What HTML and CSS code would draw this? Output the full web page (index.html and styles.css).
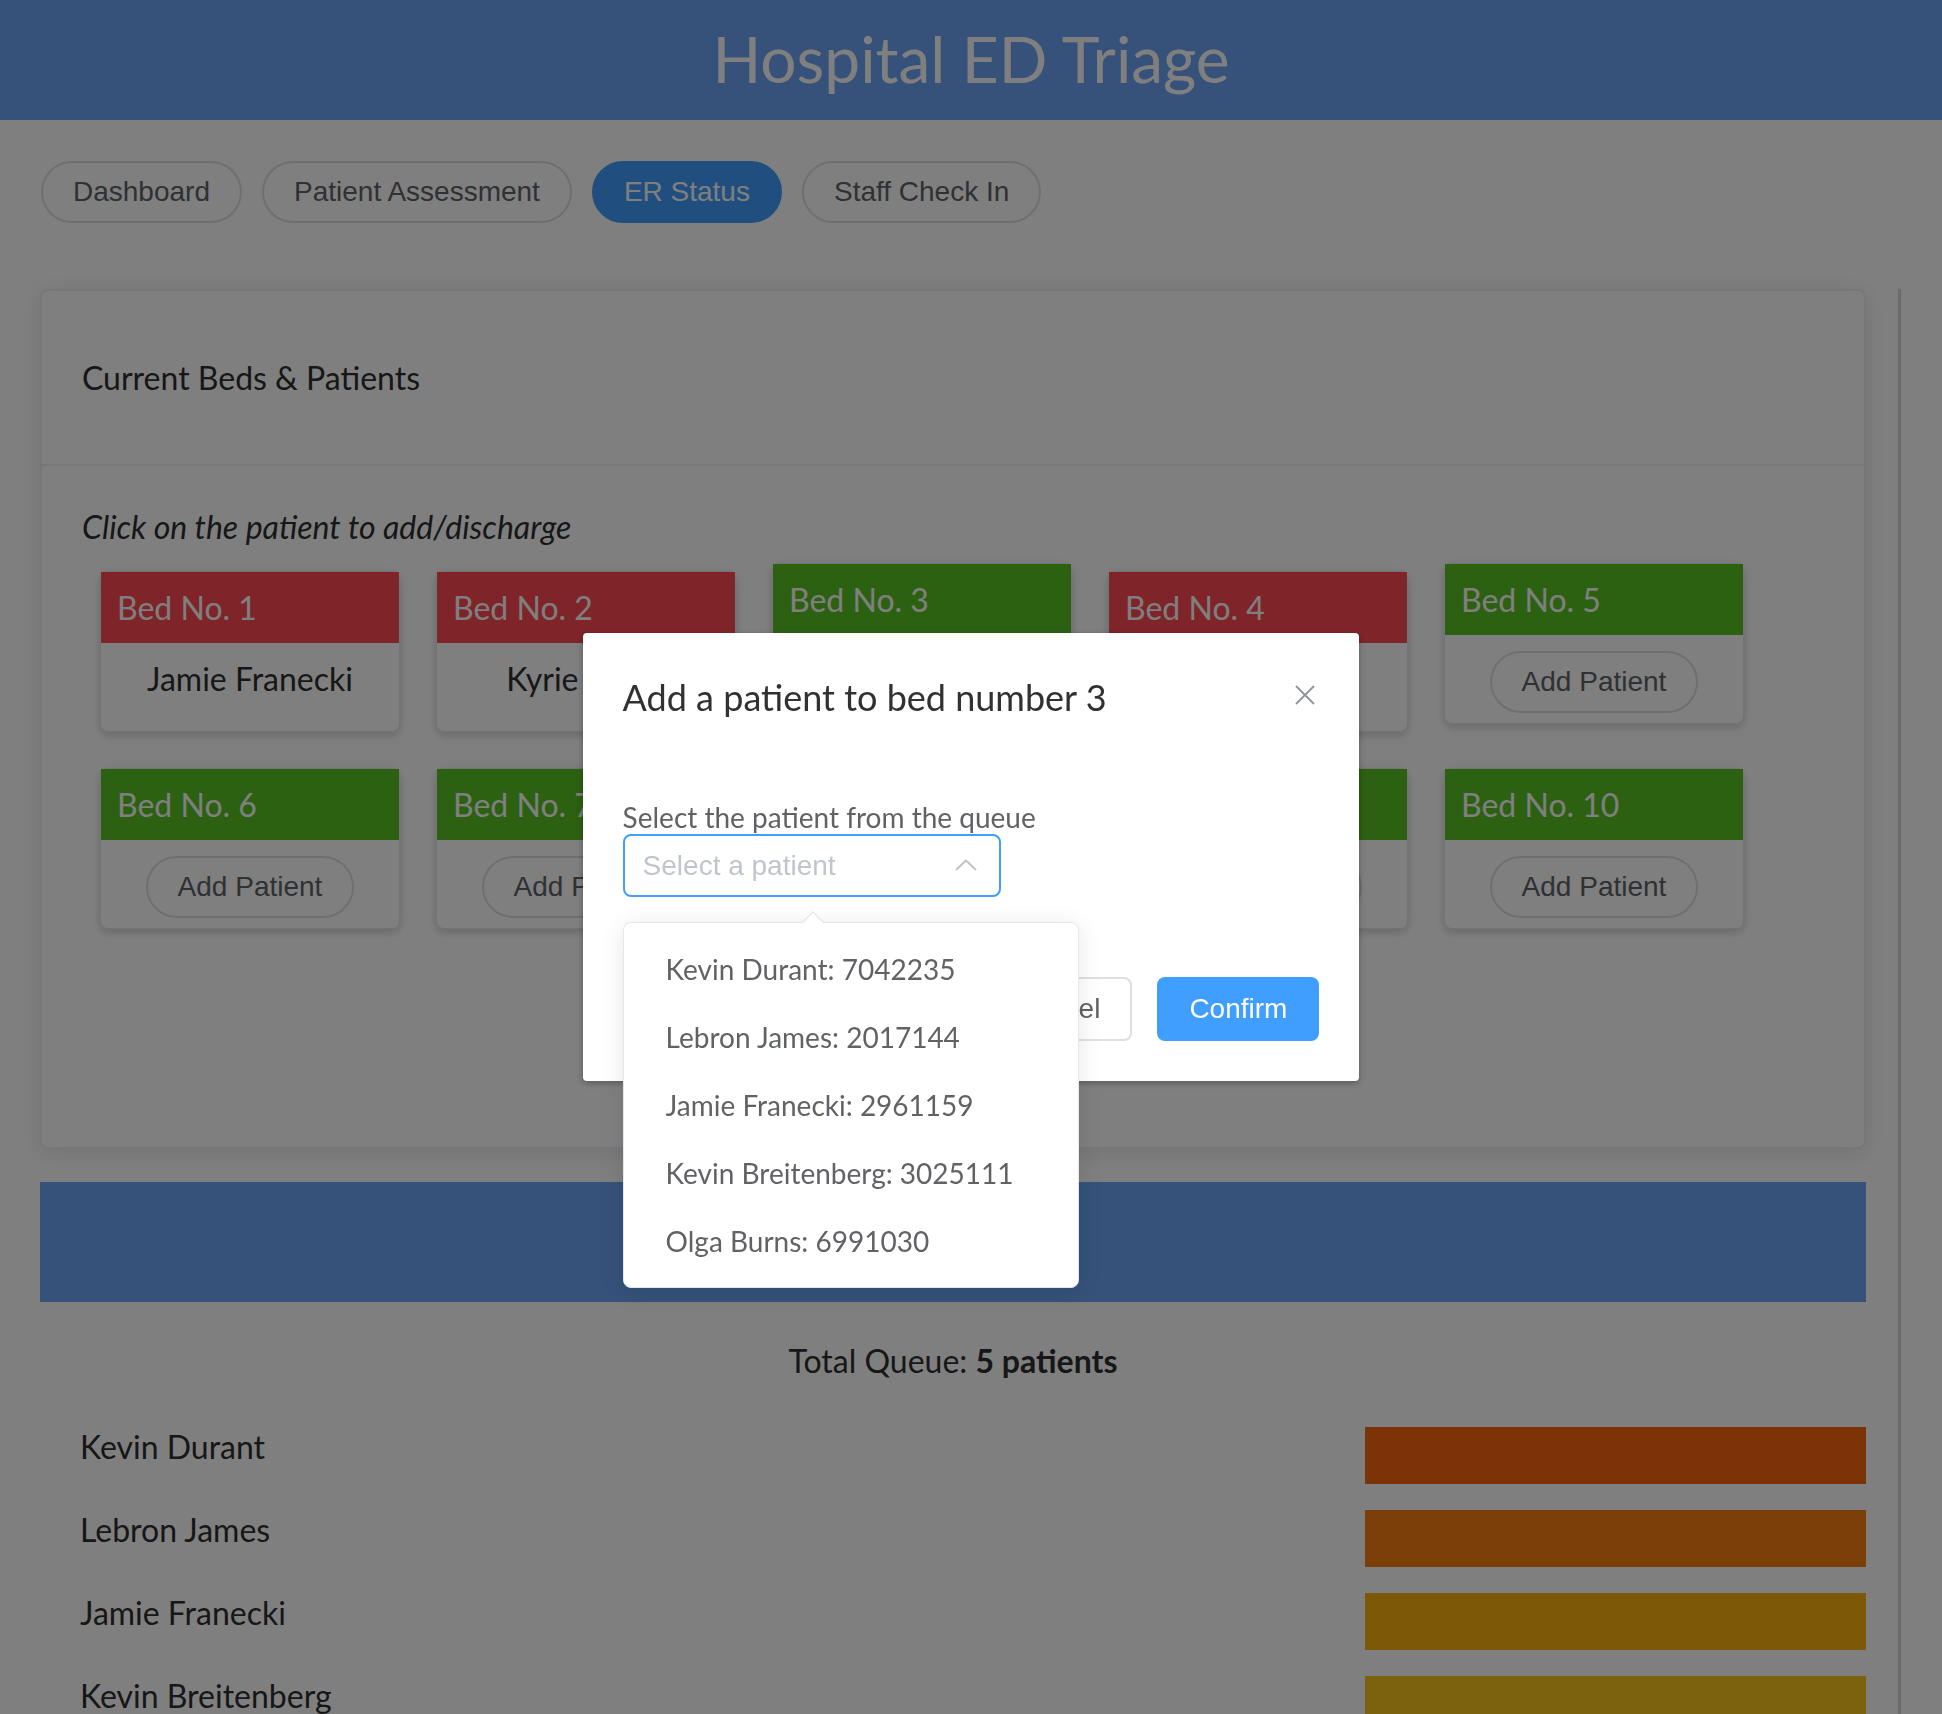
FILE: index.html
```html
<!DOCTYPE html>
<html lang="en">
<head>
<meta charset="utf-8">
<title>Hospital ED Triage</title>
<link rel="stylesheet" href="styles.css">
</head>
<body>
<header class="topbar">
  <h1 class="topbar-title">Hospital ED Triage</h1>
</header>

<nav class="nav">
  <a class="nav-pill">Dashboard</a>
  <a class="nav-pill">Patient Assessment</a>
  <a class="nav-pill active">ER Status</a>
  <a class="nav-pill">Staff Check In</a>
</nav>

<div class="layout">
  <main class="content">
    <section class="panel">
      <div class="panel-head">Current Beds &amp; Patients</div>
      <div class="panel-body">
        <p class="hint">Click on the patient to add/discharge</p>
        <div class="beds">
          <div class="bed"><div class="bed-head taken">Bed No. 1</div><div class="bed-body">Jamie Franecki</div></div>
          <div class="bed"><div class="bed-head taken">Bed No. 2</div><div class="bed-body">Kyrie Irving</div></div>
          <div class="bed"><div class="bed-head free">Bed No. 3</div><div class="bed-body"><button class="add-btn">Add Patient</button></div></div>
          <div class="bed"><div class="bed-head taken">Bed No. 4</div><div class="bed-body">Paul George</div></div>
          <div class="bed"><div class="bed-head free">Bed No. 5</div><div class="bed-body"><button class="add-btn">Add Patient</button></div></div>
          <div class="bed"><div class="bed-head free">Bed No. 6</div><div class="bed-body"><button class="add-btn">Add Patient</button></div></div>
          <div class="bed"><div class="bed-head free">Bed No. 7</div><div class="bed-body"><button class="add-btn">Add Patient</button></div></div>
          <div class="bed"><div class="bed-head free">Bed No. 8</div><div class="bed-body"><button class="add-btn">Add Patient</button></div></div>
          <div class="bed"><div class="bed-head free">Bed No. 9</div><div class="bed-body"><button class="add-btn">Add Patient</button></div></div>
          <div class="bed"><div class="bed-head free">Bed No. 10</div><div class="bed-body"><button class="add-btn">Add Patient</button></div></div>
        </div>
      </div>
    </section>

    <section class="queue">
      <div class="queue-band"></div>
      <p class="queue-total">Total Queue: <strong>5 patients</strong></p>
      <div class="queue-list">
        <div class="queue-row"><span>Kevin Durant</span><span class="queue-bar p1"></span></div>
        <div class="queue-row"><span>Lebron James</span><span class="queue-bar p2"></span></div>
        <div class="queue-row"><span>Jamie Franecki</span><span class="queue-bar p3"></span></div>
        <div class="queue-row"><span>Kevin Breitenberg</span><span class="queue-bar p4"></span></div>
        <div class="queue-row"><span>Olga Burns</span><span class="queue-bar p5"></span></div>
      </div>
    </section>
  </main>
  <aside class="side"></aside>
</div>

<div class="mask"></div>
<div class="dialog-wrap">
  <div class="dialog" role="dialog">
    <div class="dialog-head">
      <span class="dialog-title">Add a patient to bed number 3</span>
      <button class="dialog-close" aria-label="Close">
        <svg width="20" height="20" viewBox="0 0 20 20"><path d="M1 1 L19 19 M19 1 L1 19" stroke="#909399" stroke-width="1.8" fill="none"/></svg>
      </button>
    </div>
    <div class="dialog-body">
      <label class="field-label">Select the patient from the queue</label>
      <div class="select">
        <div class="select-input">Select a patient</div>
        <svg class="select-arrow" width="22" height="12" viewBox="0 0 22 12"><path d="M1 11 L11 1.5 L21 11" stroke="#c0c4cc" stroke-width="2" fill="none"/></svg>
        <ul class="dropdown">
          <li>Kevin Durant: 7042235</li>
          <li>Lebron James: 2017144</li>
          <li>Jamie Franecki: 2961159</li>
          <li>Kevin Breitenberg: 3025111</li>
          <li>Olga Burns: 6991030</li>
        </ul>
      </div>
    </div>
    <div class="dialog-foot">
      <button class="btn">Cancel</button>
      <button class="btn btn-primary">Confirm</button>
    </div>
  </div>
</div>
</body>
</html>
```

FILE: styles.css
```css
* { box-sizing: border-box; }

html, body { margin: 0; }

body {
  font-family: Lato, "Noto Sans", sans-serif;
  color: #2e2f30;
  background: #fff;
  overflow: hidden;
}

/* top bar */
.topbar {
  height: 120px;
  padding-top: 20px;
  background: #6ca4f4;
  display: flex;
  justify-content: center;
}
.topbar-title {
  margin: 0;
  font-size: 64px;
  font-weight: 400;
  line-height: normal;
  color: #fff;
}

/* nav */
.nav {
  display: flex;
  gap: 20px;
  padding: 41px 0 0 41px;
}
.nav-pill {
  font: 28px/1 "Liberation Sans", Arial, sans-serif;
  padding: 15px 30px;
  border: 2px solid #dcdfe6;
  border-radius: 31px;
  background: #fff;
  color: #606266;
}
.nav-pill.active {
  background: #409eff;
  border-color: #409eff;
  color: #fff;
}

/* layout */
.layout {
  display: flex;
  margin-top: 66px;
}
.content {
  margin-left: 40px;
  width: 1826px;
  flex: none;
}
.side {
  margin-left: 32px;
  border-left: 3px solid #d6d6d6;
  flex: 1;
}

/* beds panel */
.panel {
  background: #fff;
  border: 2px solid #ebeef5;
  border-radius: 8px;
  box-shadow: 0 4px 24px rgba(0, 0, 0, 0.1);
}
.panel-head {
  height: 175px;
  padding: 0 40px;
  border-bottom: 2px solid #ebeef5;
  display: flex;
  align-items: center;
  font-size: 32px;
}
.panel-body {
  padding: 41px 40px 200px;
}
.hint {
  margin: 0 0 -1px;
  font-size: 32px;
  font-style: italic;
  line-height: normal;
}
.beds {
  display: flex;
  flex-wrap: wrap;
  align-items: last baseline;
}
.bed {
  width: 300px;
  margin: 18px;
  background: #fff;
  border: 1px solid #e6e8ee;
  border-radius: 8px;
  box-shadow: 0 4px 8px rgba(0, 0, 0, 0.14), 0 0 12px rgba(0, 0, 0, 0.05);
}
.bed-head {
  padding: 16px;
  font-size: 32px;
  line-height: normal;
  color: #fff;
}
.bed-head.taken { background: #ff4852; }
.bed-head.free { background: #58c222; }
.bed-body {
  height: 88px;
  padding-top: 16px;
  text-align: center;
  font-size: 32px;
  line-height: normal;
}
.add-btn {
  font: 28px/1 "Liberation Sans", Arial, sans-serif;
  padding: 15px 30px;
  border: 2px solid #dcdfe6;
  border-radius: 31px;
  background: #fff;
  color: #606266;
}

/* queue */
.queue-band {
  height: 120px;
  margin-top: 33px;
  background: #6ca4f4;
}
.queue-total {
  margin: 39px 0 0;
  text-align: center;
  font-size: 32px;
  line-height: normal;
}
.queue-list {
  margin-top: 47px;
}
.queue-row {
  display: flex;
  justify-content: space-between;
  align-items: flex-start;
  height: 57px;
  margin-bottom: 26px;
  padding-left: 40px;
  font-size: 32px;
  line-height: normal;
}
.queue-bar {
  width: 501px;
  height: 57px;
}
.queue-bar.p1 { background: #f6660e; }
.queue-bar.p2 { background: #fa7e14; }
.queue-bar.p3 { background: #fab00c; }
.queue-bar.p4 { background: #f8c41e; }
.queue-bar.p5 { background: #f5d52a; }

/* modal */
.mask {
  position: fixed;
  inset: 0;
  background: rgba(0, 0, 0, 0.5);
  z-index: 10;
}
.dialog-wrap {
  position: fixed;
  inset: 0;
  display: flex;
  align-items: center;
  justify-content: center;
  z-index: 11;
}
.dialog {
  position: relative;
  width: 40%;
  background: #fff;
  border-radius: 4px;
  box-shadow: 0 2px 6px rgba(0, 0, 0, 0.3);
}
.dialog-head {
  padding: 40px 40px 20px;
}
.dialog-title {
  display: block;
  font-size: 36px;
  line-height: 48px;
  color: #303133;
}
.dialog-close {
  position: absolute;
  top: 52px;
  right: 44px;
  width: 20px;
  height: 20px;
  padding: 0;
  border: 0;
  background: none;
  display: block;
}
.dialog-close svg { display: block; }
.dialog-body {
  padding: 59px 40px 60px;
}
.field-label {
  display: block;
  margin-bottom: 0;
  font-size: 28px;
  line-height: normal;
  color: #606266;
}
.select {
  position: relative;
  width: 378px;
}
.select-input {
  height: 63px;
  padding-left: 18px;
  border: 2px solid #409eff;
  border-radius: 8px;
  display: flex;
  align-items: center;
  font: 28px "Liberation Sans", Arial, sans-serif;
  color: #c0c4cc;
}
.select-arrow {
  position: absolute;
  right: 24px;
  top: 25px;
}
.dropdown {
  position: absolute;
  top: calc(100% + 25px);
  left: 0;
  width: 456px;
  margin: 0;
  padding: 12px 0;
  list-style: none;
  background: #fff;
  border: 1px solid #e4e7ed;
  border-radius: 8px;
  box-shadow: 0 4px 24px rgba(0, 0, 0, 0.1);
}
.dropdown::before,
.dropdown::after {
  content: "";
  position: absolute;
  left: 177px;
  border-style: solid;
  border-color: transparent;
  border-width: 0 12px 12px;
}
.dropdown::before {
  top: -12px;
  border-bottom-color: #e4e7ed;
}
.dropdown::after {
  top: -10px;
  border-bottom-color: #fff;
}
.dropdown li {
  height: 68px;
  line-height: 68px;
  padding: 0 42px;
  font-size: 28px;
  color: #606266;
}
.dialog-foot {
  padding: 20px 40px 40px;
  display: flex;
  justify-content: flex-end;
  gap: 25px;
}
.btn {
  font: 28px/1 "Liberation Sans", Arial, sans-serif;
  padding: 16px 30px;
  border: 2px solid #dcdfe6;
  border-radius: 8px;
  background: #fff;
  color: #606266;
}
.btn-primary {
  background: #409eff;
  border-color: #409eff;
  color: #fff;
}
```
